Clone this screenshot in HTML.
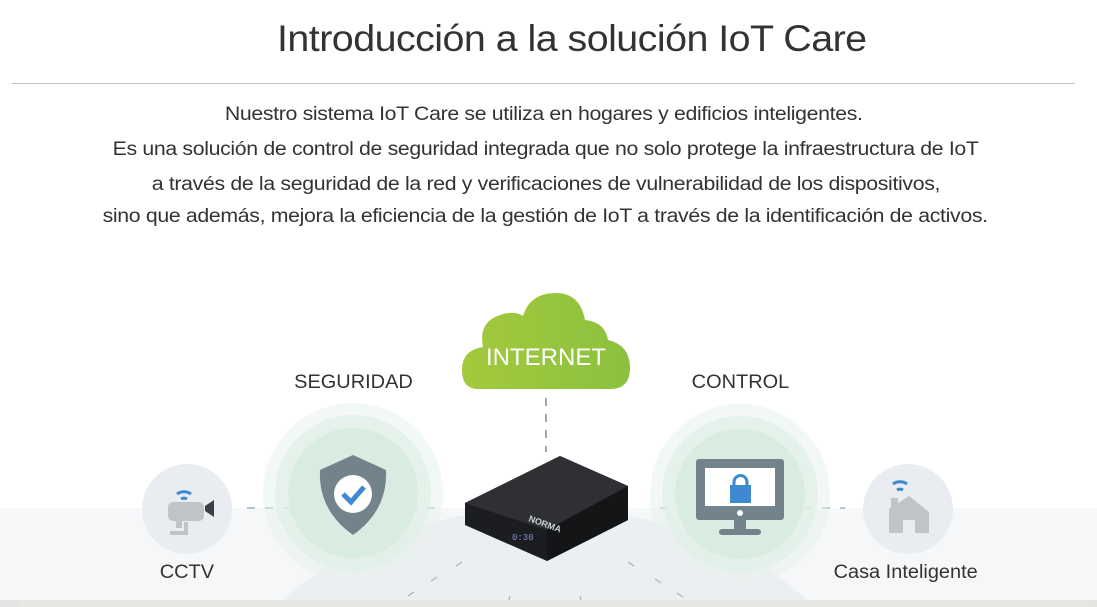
<!DOCTYPE html>
<html><head><meta charset="utf-8"><style>
html,body{margin:0;width:1097px;height:607px;overflow:hidden}
body{background:#fff;font-family:"Liberation Sans",sans-serif;position:relative}
.t{position:absolute;left:0;width:1097px;text-align:center;color:#333}
.t span{display:inline-block;transform:scaleX(1.12)}
h1{position:absolute;left:0;width:1143px;text-align:center;top:18px;margin:0;font-weight:normal;font-size:37px;color:#333;letter-spacing:-0.5px}
h1 span{display:inline-block;transform:scaleX(1.065)}
.p{font-size:19px;letter-spacing:-0.3px}
.lab{position:absolute;font-size:19px;color:#333;text-align:center;width:200px}
.lab span{display:inline-block;transform:scaleX(1.05)}
</style></head><body>
<h1><span>Introducción a la solución IoT Care</span></h1>
<div style="position:absolute;left:12px;top:83px;width:1063px;height:1px;background:#b8c4cc"></div>
<div class="t p" style="top:104px;left:-5px"><span>Nuestro sistema IoT Care se utiliza en hogares y edificios inteligentes.</span></div>
<div class="t p" style="top:139px;left:-3px"><span>Es una solución de control de seguridad integrada que no solo protege la infraestructura de IoT</span></div>
<div class="t p" style="top:174px;left:-3px"><span>a través de la seguridad de la red y verificaciones de vulnerabilidad de los dispositivos,</span></div>
<div class="t p" style="top:206px;left:-3px"><span>sino que además, mejora la eficiencia de la gestión de IoT a través de la identificación de activos.</span></div>
<svg width="1097" height="607" style="position:absolute;left:0;top:0">
<rect x="0" y="508" width="1097" height="92" fill="#f6f7f9"/>
<ellipse cx="545" cy="770" rx="345" ry="262" fill="#eceff2"/>
<rect x="0" y="600" width="1097" height="7" fill="#e4e4e2"/>
<rect x="20" y="600" width="1070" height="7" fill="#e8e6e3"/>
<line x1="247" y1="508" x2="440" y2="508" stroke="#9ab5c6" stroke-width="1.5" stroke-dasharray="8,10"/>
<line x1="660" y1="508" x2="845" y2="508" stroke="#9ab5c6" stroke-width="1.5" stroke-dasharray="8,10"/>
<line x1="546" y1="398" x2="546" y2="452" stroke="#a0a8b0" stroke-width="2" stroke-dasharray="8,8"/>
<g stroke="#9ab5c6" stroke-width="1.2">
<line x1="462" y1="562" x2="456" y2="566"/><line x1="437" y1="577" x2="431" y2="581"/><line x1="414" y1="592" x2="408" y2="596"/>
<line x1="628" y1="562" x2="634" y2="566"/><line x1="655" y1="579" x2="661" y2="583"/><line x1="677" y1="593" x2="683" y2="597"/>
<line x1="510" y1="596" x2="509" y2="600"/><line x1="580" y1="596" x2="581" y2="600"/>
</g>
<circle cx="353" cy="493" r="90" fill="#e6f1ec" opacity=".5"/>
<circle cx="353" cy="493" r="78" fill="#e0efe7" opacity=".7"/>
<circle cx="353" cy="493" r="65" fill="#d9ece1"/>
<path d="M353 455 L320 470 Q318 510 353 535 Q388 510 386 470 Z" fill="#73838b"/>
<circle cx="353" cy="494" r="19" fill="#fff"/>
<path d="M343 494 L351 502 L364 487" fill="none" stroke="#3f89d0" stroke-width="5"/>
<circle cx="740" cy="494" r="90" fill="#e6f1ec" opacity=".5"/>
<circle cx="740" cy="494" r="78" fill="#e0efe7" opacity=".7"/>
<circle cx="740" cy="494" r="65" fill="#d9ece1"/>
<rect x="696" y="459" width="88" height="61" rx="3" fill="#73838b"/>
<rect x="705" y="468" width="70" height="38" fill="#fff"/>
<circle cx="740" cy="513" r="3" fill="#fff"/>
<rect x="734" y="520" width="12" height="10" fill="#73838b"/>
<rect x="719" y="529" width="42" height="6" rx="3" fill="#73838b"/>
<rect x="730" y="485" width="21" height="18" fill="#3f89d0"/>
<path d="M734 486 v-4 a6 6 0 0 1 13 0 v4" fill="none" stroke="#3f89d0" stroke-width="3"/>
<circle cx="187" cy="509" r="45" fill="#e9edf1"/>
<path d="M177 494 a10 8 0 0 1 14 0" fill="none" stroke="#3f89d0" stroke-width="3"/>
<path d="M181 499 a5 4 0 0 1 6 0" fill="none" stroke="#3f89d0" stroke-width="3"/>
<rect x="168" y="502" width="36" height="19" rx="5" fill="#bfc4c8"/>
<path d="M205 506 L214 500 V517 L205 511Z" fill="#3a4248"/>
<rect x="176" y="520" width="6" height="8" fill="#bfc4c8"/>
<path d="M170 533 H186 V522" fill="none" stroke="#bfc4c8" stroke-width="4"/>
<circle cx="908" cy="509" r="45" fill="#e9edf1"/>
<path d="M893 484 a10 8 0 0 1 14 0" fill="none" stroke="#3f89d0" stroke-width="3"/>
<path d="M897 490 a5 4 0 0 1 6 0" fill="none" stroke="#3f89d0" stroke-width="3"/>
<path d="M889 533 V509 L909 496 L929 512 V533 H915 V520 H903 V533Z" fill="#bfc4c8"/>
<rect x="891" y="498" width="7" height="14" fill="#bfc4c8"/>
<defs><linearGradient id="g" x1="0" x2="1"><stop offset="0" stop-color="#a4c93c"/><stop offset="1" stop-color="#8bc13f"/></linearGradient></defs>
<path d="M478 389 Q462 389 462 370 Q462 350 483 347 Q478 322 500 315 Q515 310 523 316 Q530 293 556 293 Q580 293 585 320 Q605 322 608 340 Q630 345 630 368 Q630 389 610 389 Z" fill="url(#g)"/>
<text x="546" y="365" text-anchor="middle" font-size="24" fill="#fff" font-family="Liberation Sans">INTERNET</text>
<path d="M465 503 L560 456 L628 486 L628 520 L547 561 L465 525 Z" fill="#1c1d20"/>
<path d="M465 503 L560 456 L628 486 L547 530 Z" fill="#2e3034"/>
<path d="M547 530 L628 486 L628 520 L547 561Z" fill="#141517"/>
<text x="528" y="521" font-size="9" fill="#cfd3d6" transform="rotate(20 528 521)" font-family="Liberation Sans" font-weight="bold">NORMA</text>
<text x="512" y="540" font-size="9" fill="#7f8fd0" font-family="Liberation Mono">0:30</text>
</svg>
<div class="lab" style="left:253px;top:372px"><span>SEGURIDAD</span></div>
<div class="lab" style="left:640px;top:372px"><span>CONTROL</span></div>
<div class="lab" style="left:87px;top:562px"><span>CCTV</span></div>
<div class="lab" style="left:806px;top:562px"><span>Casa Inteligente</span></div>
</body></html>
